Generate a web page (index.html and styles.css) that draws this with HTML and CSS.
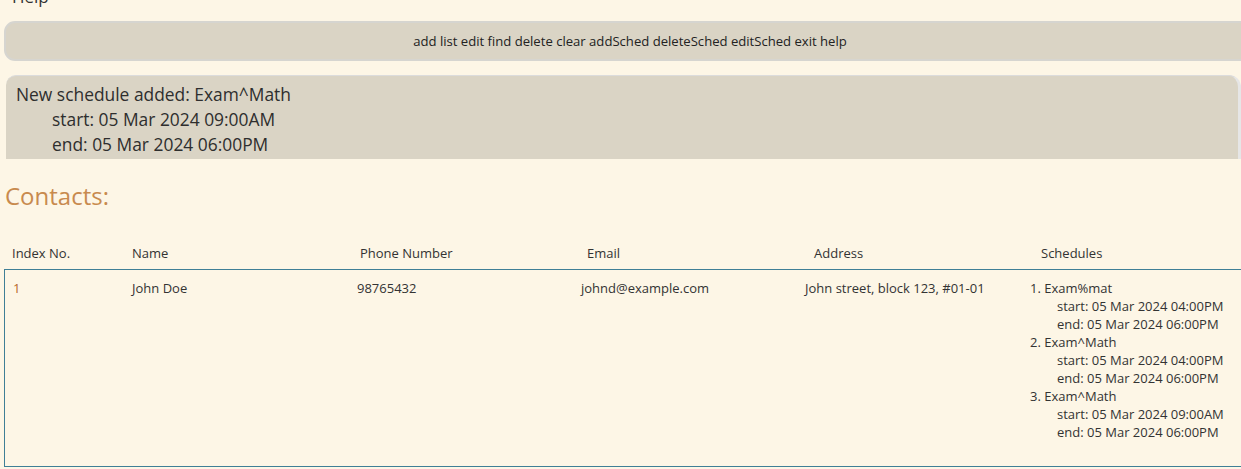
FILE: index.html
```html
<!DOCTYPE html>
<html>
<head>
<meta charset="utf-8">
<link rel="stylesheet" href="styles.css">
</head>
<body>
<div class="app">
  <div class="menu"><span class="menu-item">Help</span></div>
  <div class="command-box">add list edit find delete clear addSched deleteSched editSched exit help</div>
  <div class="result-box">
    <div class="result-line">New schedule added: Exam^Math</div>
    <div class="result-line indent">start: 05 Mar 2024 09:00AM</div>
    <div class="result-line indent">end: 05 Mar 2024 06:00PM</div>
  </div>
  <h2 class="section-title">Contacts:</h2>
  <div class="table-header">
    <div class="col c-index">Index No.</div>
    <div class="col c-name">Name</div>
    <div class="col c-phone">Phone Number</div>
    <div class="col c-email">Email</div>
    <div class="col c-address">Address</div>
    <div class="col c-sched">Schedules</div>
  </div>
  <div class="table-body">
    <div class="row">
      <div class="col c-index idx">1</div>
      <div class="col c-name">John Doe</div>
      <div class="col c-phone">98765432</div>
      <div class="col c-email">johnd@example.com</div>
      <div class="col c-address">John street, block 123, #01-01</div>
      <div class="col c-sched">
        <div>1. Exam%mat</div>
        <div class="sub">start: 05 Mar 2024 04:00PM</div>
        <div class="sub">end: 05 Mar 2024 06:00PM</div>
        <div>2. Exam^Math</div>
        <div class="sub">start: 05 Mar 2024 04:00PM</div>
        <div class="sub">end: 05 Mar 2024 06:00PM</div>
        <div>3. Exam^Math</div>
        <div class="sub">start: 05 Mar 2024 09:00AM</div>
        <div class="sub">end: 05 Mar 2024 06:00PM</div>
      </div>
    </div>
  </div>
</div>
</body>
</html>
```
FILE: styles.css
```css
html, body {
  margin: 0;
  padding: 0;
  background: #fdf6e6;
  overflow: hidden;
  width: 1241px;
  height: 469px;
}
body {
  font-family: "Open Sans", "Noto Sans", sans-serif;
  color: #333;
}
.app {
  width: 1241px;
}
.menu {
  height: 34px;
  margin-top: -14px;
  padding-left: 12px;
}
.menu-item {
  font-size: 17px;
  line-height: 22px;
  color: #333;
}
.command-box {
  margin: 1px 0 0 4px;
  width: 1252px;
  height: 40px;
  box-sizing: border-box;
  background: #dad4c5;
  border: 2px solid #d6d5d0;
  border-radius: 11px;
  text-align: center;
  font-size: 13.1px;
  line-height: 36px;
  color: #222;
}
.result-box {
  margin: 14px 0 0 6px;
  width: 1235px;
  height: 84px;
  box-sizing: border-box;
  background: #dad4c5;
  border-top: 1px solid #dcdcdc;
  border-right: 3px solid #e6e6e6;
  border-radius: 10px 12px 0 0;
  padding: 6px 0 0 10px;
}
.result-line {
  font-size: 17.4px;
  line-height: 25px;
  color: #2e2e2e;
}
.result-line.indent {
  padding-left: 36px;
}
.section-title {
  margin: 22px 0 0 5px;
  font-weight: normal;
  font-size: 24px;
  line-height: 30px;
  color: #c88a4e;
}
.table-header {
  display: flex;
  margin-top: 29px;
  height: 29px;
  font-size: 13px;
  line-height: 18px;
  color: #333;
  padding-top: 4px;
  box-sizing: border-box;
}
.table-body {
  margin-left: 4px;
  width: 1250px;
  height: 198px;
  box-sizing: border-box;
  border: 1px solid #3f7f96;
}
.row {
  display: flex;
  padding-top: 9px;
  font-size: 13px;
  line-height: 18px;
  color: #333;
}
.table-header .c-index { width: 120px; padding-left: 12px; }
.table-header .c-name { width: 228px; }
.table-header .c-phone { width: 227px; }
.table-header .c-email { width: 227px; }
.table-header .c-address { width: 227px; }
.table-header .c-sched { width: 200px; }
.col { box-sizing: content-box; }
.row .c-index { width: 119px; padding-left: 8px; }
.row .c-name { width: 225px; }
.row .c-phone { width: 224px; }
.row .c-email { width: 224px; }
.row .c-address { width: 225px; }
.row .c-sched { width: 210px; }
.idx { color: #b8692a; }
.sub { padding-left: 27px; }
```
